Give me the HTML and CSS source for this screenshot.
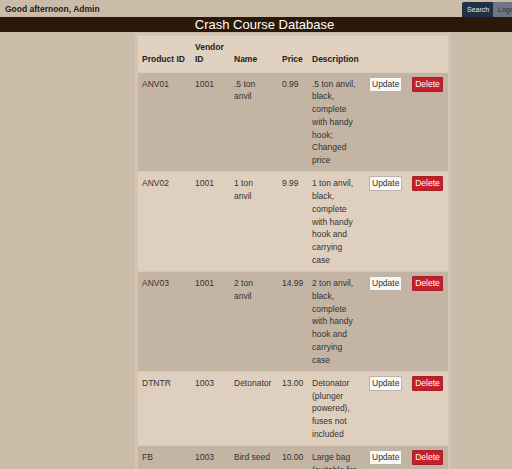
FILE: index.html
```html
<!DOCTYPE html>
<html lang="en">
<head>
<meta charset="utf-8">
<title>Crash Course Database</title>
<link rel="stylesheet" href="styles.css">
</head>
<body>
<div class="topbar">
  <span class="greeting">Good afternoon, Admin</span>
  <div class="navbtns">
    <button class="nav-search">Search</button>
    <button class="nav-logout">Logout</button>
  </div>
</div>
<div class="band"><h1 class="title">Crash Course Database</h1></div>
<div class="wrap">
<table class="products">
  <colgroup>
    <col class="c-id"><col class="c-vend"><col class="c-name"><col class="c-price"><col class="c-desc"><col class="c-upd"><col class="c-del">
  </colgroup>
  <thead>
    <tr><th>Product ID</th><th>Vendor ID</th><th class="name">Name</th><th>Price</th><th>Description</th><th></th><th></th></tr>
  </thead>
  <tbody>
    <tr class="dark"><td>ANV01</td><td>1001</td><td class="name">.5 ton anvil</td><td>0.99</td><td>.5 ton anvil, black, complete with handy hook; Changed price</td><td><button class="upd">Update</button></td><td><button class="del">Delete</button></td></tr>
    <tr class="light"><td>ANV02</td><td>1001</td><td class="name">1 ton anvil</td><td>9.99</td><td>1 ton anvil, black, complete with handy hook and carrying case</td><td><button class="upd">Update</button></td><td><button class="del">Delete</button></td></tr>
    <tr class="dark"><td>ANV03</td><td>1001</td><td class="name">2 ton anvil</td><td>14.99</td><td>2 ton anvil, black, complete with handy hook and carrying case</td><td><button class="upd">Update</button></td><td><button class="del">Delete</button></td></tr>
    <tr class="light"><td>DTNTR</td><td>1003</td><td class="name">Detonator</td><td>13.00</td><td>Detonator (plunger powered), fuses not included</td><td><button class="upd">Update</button></td><td><button class="del">Delete</button></td></tr>
    <tr class="dark"><td>FB</td><td>1003</td><td class="name">Bird seed</td><td>10.00</td><td>Large bag (suitable for road runners)</td><td><button class="upd">Update</button></td><td><button class="del">Delete</button></td></tr>
  </tbody>
</table>
</div>
</body>
</html>
```
FILE: styles.css
```css
html, body {
  margin: 0;
  padding: 0;
  overflow: hidden;
  height: 100%;
}
body {
  background: #cbbba9;
  font-family: "Liberation Sans", Arial, sans-serif;
  font-size: 8.5px;
  color: #333;
}
.topbar {
  display: flex;
  align-items: flex-start;
  height: 17px;
  padding-left: 5px;
}
.greeting {
  flex: 1;
  font-weight: bold;
  color: #222;
  line-height: 19px;
}
.navbtns {
  display: flex;
  margin-top: 2px;
  margin-right: -16px;
}
.navbtns button {
  height: 15px;
  border: none;
  font-family: "Liberation Sans", Arial, sans-serif;
  font-size: 7px;
  padding: 0 5px;
  margin: 0;
}
.nav-search {
  background: #1f3047;
  color: #e6e9ee;
  border-radius: 2px 0 0 0;
  width: 31px;
}
.nav-logout {
  background: #6c7684;
  color: #1f2a36;
  width: 35px;
  text-align: left;
}
.band {
  background: #2a1908;
  height: 15px;
}
.title {
  margin: 0;
  color: #fff;
  font-weight: normal;
  font-size: 13px;
  line-height: 15px;
  text-align: center;
  padding-left: 17px;
}
.wrap {
  margin: 1px 0 0 135px;
  width: 310px;
  padding: 3px;
  background: #d3c4b3;
  min-height: 500px;
}
.products {
  width: 310px;
  table-layout: fixed;
  border-collapse: collapse;
  line-height: 12.75px;
}
.c-id { width: 53px; }
.c-vend { width: 39px; }
.c-name { width: 48px; }
.c-price { width: 30px; }
.c-desc { width: 57px; }
.c-upd { width: 43px; }
.c-del { width: 40px; }
.products th {
  background: #e0d1c0;
  color: #222;
  font-weight: bold;
  text-align: left;
  vertical-align: bottom;
  padding: 4.5px 4px 5.5px;
  border-bottom: 1px solid #d9ccbd;
}
.products td {
  vertical-align: top;
  padding: 5px 4px 4.5px;
  border-top: 1px solid #d6c8b8;
}
.products .name {
  padding-right: 6px;
}
.dark td { background: #c4b4a3; }
.light td { background: #dfcfbe; }
.products button {
  font-family: "Liberation Sans", Arial, sans-serif;
  font-size: 8.5px;
  height: 15px;
  line-height: 11px;
  padding: 0 2px;
  margin: -1px 0 0;
  border-radius: 1px;
  box-sizing: border-box;
}
.upd {
  background: #f8f8f6;
  color: #333;
  border: 1px solid #b9b2aa;
  width: 33px;
}
.del {
  background: #c41f2b;
  color: #fff;
  border: 1px solid #a9202a;
  width: 31px;
}
```
